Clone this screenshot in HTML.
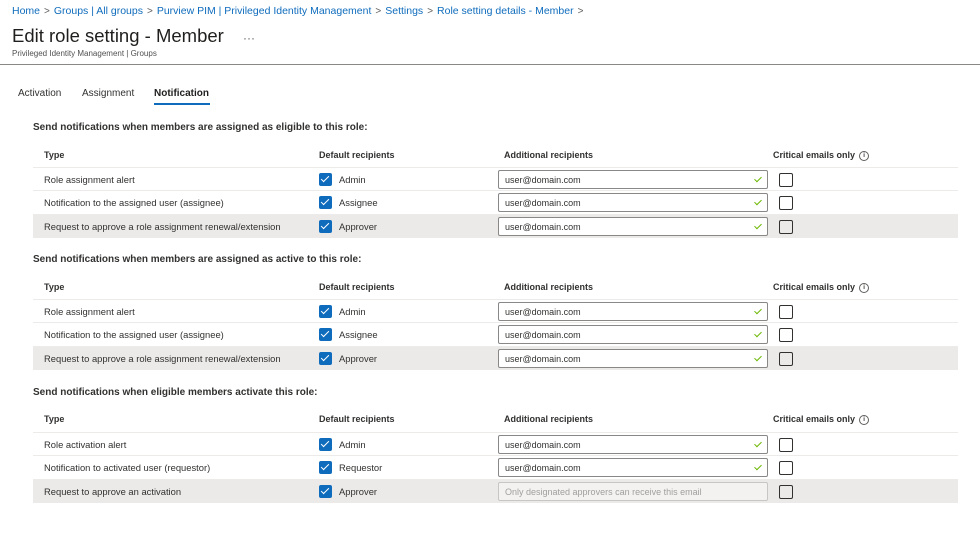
<!DOCTYPE html><html><head><style>
body{margin:0;width:980px;height:546px;background:#fff;font-family:"Liberation Sans",sans-serif;color:#323130;position:relative;overflow:hidden}
.a{position:absolute;white-space:nowrap}
.bc{top:5px;left:12px;font-size:10.5px;color:#0f6cbd}
.bc span{color:#605e5c;margin:0 4px;font-size:10px}
.t{top:25px;left:12px;font-size:18.5px;color:#201f1e;font-weight:500}
.sub{top:49px;left:12px;font-size:8px;color:#505050}
.hr{top:64px;left:0;width:980px;height:1px;background:#8a8886}
.tab{top:88px;font-size:10px}
.sec{position:absolute;left:0;top:0;width:980px;height:140px}
.h{font-size:10px;font-weight:bold;left:33px}
.th{font-size:9px;font-weight:bold}
.row{position:absolute;left:33px;width:925px;height:23px;border-top:1px solid #edebe9}
.g{background:#ebeae9}
.row .c{position:absolute;top:6px;font-size:9.4px}
.cb{position:absolute;left:286px;top:5px;width:13px;height:13px;background:#0f6cbd;border-radius:2px}
.cb:after{content:"";position:absolute;left:4px;top:1px;width:3px;height:7px;border:solid #fff;border-width:0 1.5px 1.5px 0;transform:rotate(45deg)}
.in{position:absolute;left:465px;top:2px;width:268px;height:17px;border:1px solid #8a8886;border-radius:2px;background:#fff;font-size:9px;line-height:18px;text-indent:6px}
.in:after{content:"";position:absolute;right:7px;top:4px;width:3px;height:6px;border:solid #6bb700;border-width:0 1px 1px 0;transform:rotate(45deg)}
.in.d{background:#f3f2f1;color:#a19f9d;border-color:#c8c6c4}
.in.d:after{display:none}
.ck{position:absolute;left:746px;top:5px;width:12px;height:12px;border:1px solid #323130;border-radius:2px;background:#fff}
.g .ck{background:#ebeae9}
.i{display:inline-block;width:8px;height:8px;border:1px solid #605e5c;border-radius:50%;font-size:6px;line-height:8px;text-align:center;margin-left:4px;vertical-align:1px}
</style></head><body>
<div class="a bc">Home<span>&gt;</span>Groups | All groups<span>&gt;</span>Purview PIM | Privileged Identity Management<span>&gt;</span>Settings<span>&gt;</span>Role setting details - Member<span>&gt;</span></div>
<div class="a t">Edit role setting - Member <span style="font-size:12px;color:#605e5c;margin-left:14px">···</span></div>
<div class="a sub">Privileged Identity Management | Groups</div>
<div class="a hr"></div>
<div class="a tab" style="left:18px">Activation</div>
<div class="a tab" style="left:82px">Assignment</div>
<div class="a tab" style="left:154px;color:#201f1e;font-weight:bold">Notification</div>
<div class="a" style="left:154px;top:103px;width:56px;height:2px;background:#0f6cbd"></div>

<div class="sec" style="top:0">
<div class="a h" style="top:122px">Send notifications when members are assigned as eligible to this role:</div>
<div class="a th" style="left:44px;top:150px">Type</div><div class="a th" style="left:319px;top:150px">Default recipients</div><div class="a th" style="left:504px;top:150px">Additional recipients</div><div class="a th" style="left:773px;top:150px">Critical emails only<span class="i">i</span></div>
<div class="row" style="top:167px"><div class="c" style="left:11px">Role assignment alert</div><div class="cb"></div><div class="c" style="left:306px">Admin</div><div class="in">user@domain.com</div><div class="ck"></div></div>
<div class="row" style="top:190px"><div class="c" style="left:11px">Notification to the assigned user (assignee)</div><div class="cb"></div><div class="c" style="left:306px">Assignee</div><div class="in">user@domain.com</div><div class="ck"></div></div>
<div class="row g" style="top:214px"><div class="c" style="left:11px">Request to approve a role assignment renewal/extension</div><div class="cb"></div><div class="c" style="left:306px">Approver</div><div class="in">user@domain.com</div><div class="ck"></div></div>
</div>

<div class="sec" style="top:132px">
<div class="a h" style="top:122px">Send notifications when members are assigned as active to this role:</div>
<div class="a th" style="left:44px;top:150px">Type</div><div class="a th" style="left:319px;top:150px">Default recipients</div><div class="a th" style="left:504px;top:150px">Additional recipients</div><div class="a th" style="left:773px;top:150px">Critical emails only<span class="i">i</span></div>
<div class="row" style="top:167px"><div class="c" style="left:11px">Role assignment alert</div><div class="cb"></div><div class="c" style="left:306px">Admin</div><div class="in">user@domain.com</div><div class="ck"></div></div>
<div class="row" style="top:190px"><div class="c" style="left:11px">Notification to the assigned user (assignee)</div><div class="cb"></div><div class="c" style="left:306px">Assignee</div><div class="in">user@domain.com</div><div class="ck"></div></div>
<div class="row g" style="top:214px"><div class="c" style="left:11px">Request to approve a role assignment renewal/extension</div><div class="cb"></div><div class="c" style="left:306px">Approver</div><div class="in">user@domain.com</div><div class="ck"></div></div>
</div>

<div class="sec" style="top:265px">
<div class="a h" style="top:122px">Send notifications when eligible members activate this role:</div>
<div class="a th" style="left:44px;top:149px">Type</div><div class="a th" style="left:319px;top:149px">Default recipients</div><div class="a th" style="left:504px;top:149px">Additional recipients</div><div class="a th" style="left:773px;top:149px">Critical emails only<span class="i">i</span></div>
<div class="row" style="top:167px"><div class="c" style="left:11px">Role activation alert</div><div class="cb"></div><div class="c" style="left:306px">Admin</div><div class="in">user@domain.com</div><div class="ck"></div></div>
<div class="row" style="top:190px"><div class="c" style="left:11px">Notification to activated user (requestor)</div><div class="cb"></div><div class="c" style="left:306px">Requestor</div><div class="in">user@domain.com</div><div class="ck"></div></div>
<div class="row g" style="top:214px"><div class="c" style="left:11px">Request to approve an activation</div><div class="cb"></div><div class="c" style="left:306px">Approver</div><div class="in d">Only designated approvers can receive this email</div><div class="ck"></div></div>
</div>
</body></html>
